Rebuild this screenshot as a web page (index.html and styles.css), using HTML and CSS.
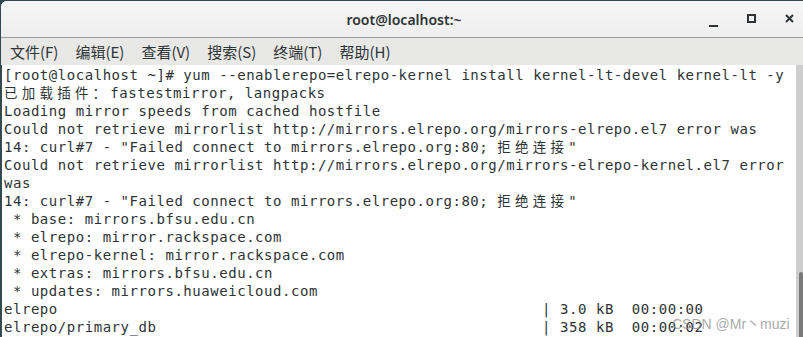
FILE: index.html
```html
<!DOCTYPE html>
<html>
<head>
<meta charset="utf-8">
<link rel="stylesheet" href="styles.css">
</head>
<body>
<div class="window">
  <div class="titlebar">
    <div class="title">root@localhost:~</div>
    <div class="controls">
      <svg class="ctl" width="12" height="12" viewBox="0 0 12 12"><rect x="0" y="9" width="9" height="2" fill="#2e3436"/></svg>
      <svg class="ctl" width="12" height="12" viewBox="0 0 12 12"><rect x="1" y="1" width="7" height="7" fill="none" stroke="#2e3436" stroke-width="2"/></svg>
      <svg class="ctl" width="12" height="12" viewBox="0 0 12 12"><path d="M1 1 L8 8 M8 1 L1 8" stroke="#2e3436" stroke-width="2" fill="none"/></svg>
    </div>
  </div>
  <div class="menubar">
    <span class="mi">文件(F)</span>
    <span class="mi">编辑(E)</span>
    <span class="mi">查看(V)</span>
    <span class="mi">搜索(S)</span>
    <span class="mi">终端(T)</span>
    <span class="mi">帮助(H)</span>
  </div>
  <div class="term">
<pre class="out">[root@localhost ~]# yum --enablerepo=elrepo-kernel install kernel-lt-devel kernel-lt -y
<span class="w">已加载插件：</span>fastestmirror, langpacks
Loading mirror speeds from cached hostfile
Could not retrieve mirrorlist http://mirrors.elrepo.org/mirrors-elrepo.el7 error was
14: curl#7 - "Failed connect to mirrors.elrepo.org:80; <span class="w">拒绝连接</span>"
Could not retrieve mirrorlist http://mirrors.elrepo.org/mirrors-elrepo-kernel.el7 error
was
14: curl#7 - "Failed connect to mirrors.elrepo.org:80; <span class="w">拒绝连接</span>"
 * base: mirrors.bfsu.edu.cn
 * elrepo: mirror.rackspace.com
 * elrepo-kernel: mirror.rackspace.com
 * extras: mirrors.bfsu.edu.cn
 * updates: mirrors.huaweicloud.com
elrepo                                                      | 3.0 kB  00:00:00
elrepo/primary_db                                           | 358 kB  00:00:02</pre>
    <div class="scrollbar"><div class="thumb"></div></div>
  </div>
  <div class="watermark">CSDN @Mr丶muzi</div>
</div>
</body>
</html>
```
FILE: styles.css
```css
html, body {
  margin: 0;
  padding: 0;
}
body {
  width: 803px;
  height: 337px;
  overflow: hidden;
  background: #2f4a50;
}
.window {
  position: relative;
  margin: 1px 0 0 1px;
  height: 336px;
  display: flex;
  flex-direction: column;
  background: #ffffff;
  border-top-left-radius: 6px;
  overflow: hidden;
}
.titlebar {
  height: 36px;
  flex: none;
  background: linear-gradient(#f6f6f6, #eeeeee);
  border-bottom: 1px solid #9c9c9c;
  display: flex;
  align-items: center;
  justify-content: center;
  position: relative;
}
.title {
  font-family: "Noto Sans", "DejaVu Sans", sans-serif;
  font-weight: 600;
  font-size: 14px;
  color: #2e3436;
  margin-left: 4px;
  margin-top: 1px;
}
.controls {
  position: absolute;
  right: 6px;
  top: 13px;
  display: flex;
  gap: 26px;
}
.ctl {
  display: block;
}
.controls .ctl:first-child {
  margin-top: 2px;
}
.menubar {
  height: 27px;
  flex: none;
  background: #e8e8e7;
  display: flex;
  align-items: center;
  gap: 17px;
  padding-left: 9px;
  font-family: "Noto Sans CJK SC", "Noto Sans", sans-serif;
  font-size: 15px;
  color: #2e3436;
}
.mi {
  line-height: 20px;
}
.term {
  flex: 1;
  display: flex;
  border-left: 1px solid #3b4a4e;
  min-height: 0;
}
.out {
  flex: 1;
  margin: 0;
  padding: 1px 0 0 2px;
  font-family: "DejaVu Sans Mono", monospace;
  font-size: 14px;
  letter-spacing: 0.54px;
  line-height: 18px;
  color: #2e3436;
  white-space: pre;
  overflow: hidden;
}
.w {
  font-family: "Noto Sans CJK SC", sans-serif;
  font-size: 13.5px;
  letter-spacing: 4.22px;
  line-height: 10px;
}
.scrollbar {
  width: 7px;
  flex: none;
  background: #cdcdcd;
  position: relative;
}
.thumb {
  position: absolute;
  left: 3px;
  right: 0;
  top: 207px;
  bottom: 0;
  background: #7a7a7a;
  border-top-left-radius: 3px;
  border-top-right-radius: 3px;
}
.watermark {
  position: absolute;
  left: 671px;
  top: 312px;
  font-family: "Liberation Sans", "Noto Sans CJK SC", sans-serif;
  font-size: 14px;
  color: rgba(140, 140, 140, 0.75);
  white-space: nowrap;
}
```
